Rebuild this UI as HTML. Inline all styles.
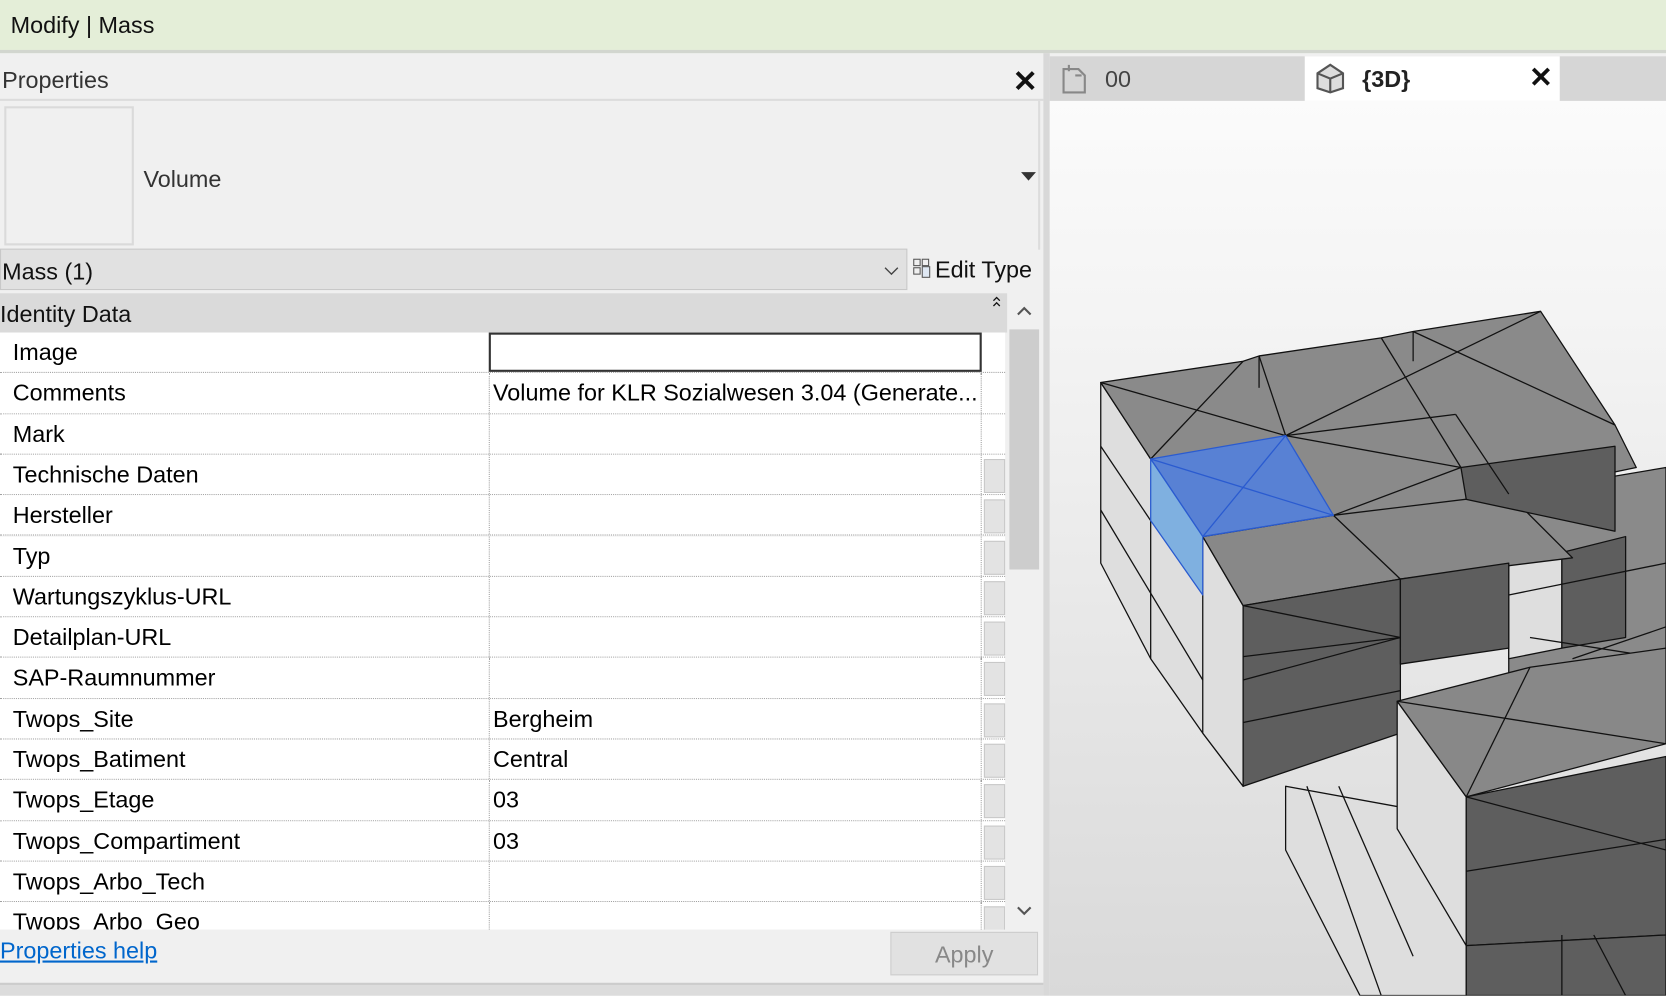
<!DOCTYPE html>
<html><head><meta charset="utf-8"><style>
*{margin:0;padding:0;box-sizing:border-box}
html,body{width:1666px;height:996px;overflow:hidden;background:#f0f0f0;font-family:"Liberation Sans",sans-serif}
#s{position:absolute;left:0;top:0;width:1568px;height:937px;transform:scale(1.0625);transform-origin:0 0;background:#f0f0f0}
.a{position:absolute}
.t{font-size:22px;color:#111;white-space:nowrap}
.row{position:absolute;left:0;width:946px;height:38.3px;border-bottom:1px dotted #a0a0a0;background:#fff}
.row .n{position:absolute;left:12px;top:6px;font-size:22px}
.row .v{position:absolute;left:460px;top:0;width:464px;height:100%;border-left:1px dotted #a0a0a0;border-right:1px dotted #a0a0a0;padding-left:3px;padding-top:6px;font-size:22px;white-space:nowrap;overflow:hidden}
.row .g{position:absolute;left:926px;top:4px;width:20px;height:32px;background:#e3e3e3;border:1px solid #c8c8c8}
</style></head><body><div id="s">
<div class="a" style="left:0;top:0;width:1568px;height:50px;background:#e4eed8;border-bottom:3px solid #d2d6cf"></div>
<div class="a t" style="left:10px;top:11px">Modify | Mass</div>

<div class="a" style="left:0;top:53px;width:982px;height:42px;background:#f0f0f0;border-bottom:2px solid #dcdcdc"></div>
<div class="a t" style="left:2px;top:63px;color:#333">Properties</div>
<div class="a" style="left:953px;top:60px;font-size:28px;font-weight:bold;color:#111">✕</div>

<div class="a" style="left:4px;top:100px;width:122px;height:131px;border:2px solid #dadada;background:#f0f0f0"></div>
<div class="a t" style="left:135px;top:156px;color:#333">Volume</div>
<div class="a" style="left:961px;top:162px;width:0;height:0;border-left:7px solid transparent;border-right:7px solid transparent;border-top:8px solid #333"></div>
<div class="a" style="left:977px;top:95px;width:2px;height:140px;background:#dcdcdc"></div>

<div class="a" style="left:0;top:234px;width:854px;height:39px;background:#e1e1e1;border:1px solid #c8c8c8"></div>
<div class="a t" style="left:2px;top:243px">Mass (1)</div>
<svg class="a" style="left:832px;top:250px" width="14" height="10"><path d="M1 2l6 6 6-6" fill="none" stroke="#444" stroke-width="1.3"/></svg>
<svg class="a" style="left:859px;top:243px" width="18" height="20"><rect x="1" y="1" width="6" height="6" fill="none" stroke="#555"/><rect x="1" y="9" width="6" height="6" fill="none" stroke="#555"/><rect x="9" y="1" width="6" height="6" fill="none" stroke="#555"/><rect x="9" y="8" width="7" height="10" fill="#dfe8f3" stroke="#555"/></svg>
<div class="a t" style="left:880px;top:241px">Edit Type</div>

<div class="a" style="left:0;top:276px;width:948px;height:37px;background:#dadada"></div>
<div class="a t" style="left:0;top:283px">Identity Data</div>
<svg class="a" style="left:933px;top:278px" width="10" height="12"><path d="M2 5l3-3 3 3M2 10l3-3 3 3" fill="none" stroke="#111" stroke-width="1.2"/></svg>
<div class="a" style="left:948px;top:276px;width:30px;height:600px;background:#f0f0f0"></div>
<div class="a" style="left:950px;top:310px;width:28px;height:226px;background:#cdcdcd"></div>
<svg class="a" style="left:957px;top:288px" width="14" height="10"><path d="M1 8l6-6 6 6" fill="none" stroke="#555" stroke-width="2"/></svg>
<svg class="a" style="left:957px;top:852px" width="14" height="10"><path d="M1 2l6 6 6-6" fill="none" stroke="#555" stroke-width="2"/></svg>

<div class="row" style="top:313px"><span class="n">Image</span><div class="v" style="border:2px solid #333;height:37px"></div></div>
<div class="row" style="top:351.3px"><span class="n">Comments</span><div class="v">Volume for KLR Sozialwesen 3.04 (Generate...</div></div>
<div class="row" style="top:389.6px"><span class="n">Mark</span><div class="v"></div></div>
<div class="row" style="top:427.9px"><span class="n">Technische Daten</span><div class="v"></div><div class="g"></div></div>
<div class="row" style="top:466.2px"><span class="n">Hersteller</span><div class="v"></div><div class="g"></div></div>
<div class="row" style="top:504.5px"><span class="n">Typ</span><div class="v"></div><div class="g"></div></div>
<div class="row" style="top:542.8px"><span class="n">Wartungszyklus-URL</span><div class="v"></div><div class="g"></div></div>
<div class="row" style="top:581.1px"><span class="n">Detailplan-URL</span><div class="v"></div><div class="g"></div></div>
<div class="row" style="top:619.4px"><span class="n">SAP-Raumnummer</span><div class="v"></div><div class="g"></div></div>
<div class="row" style="top:657.7px"><span class="n">Twops_Site</span><div class="v">Bergheim</div><div class="g"></div></div>
<div class="row" style="top:696px"><span class="n">Twops_Batiment</span><div class="v">Central</div><div class="g"></div></div>
<div class="row" style="top:734.3px"><span class="n">Twops_Etage</span><div class="v">03</div><div class="g"></div></div>
<div class="row" style="top:772.6px"><span class="n">Twops_Compartiment</span><div class="v">03</div><div class="g"></div></div>
<div class="row" style="top:810.9px"><span class="n">Twops_Arbo_Tech</span><div class="v"></div><div class="g"></div></div>
<div class="row" style="top:849.2px;height:26px;overflow:hidden;border-bottom:none"><span class="n">Twops_Arbo_Geo</span><div class="v"></div><div class="g"></div></div>

<div class="a" style="left:0;top:875px;width:982px;height:50px;background:#f0f0f0"></div>
<div class="a" style="left:0;top:882px;font-size:22px;color:#0066cc;text-decoration:underline">Properties help</div>
<div class="a" style="left:838px;top:877px;width:139px;height:41px;background:#e1e1e1;border:1px solid #ccc;font-size:22px;color:#888;text-align:center;line-height:41px">Apply</div>
<div class="a" style="left:0;top:925px;width:982px;height:12px;background:#dcdcdc;border-top:2px solid #ccc"></div>

<div class="a" style="left:982px;top:50px;width:6px;height:887px;background:#d8d8d8"></div>
<div class="a" style="left:988px;top:53px;width:580px;height:42px;background:#d6d6d6"></div>
<svg class="a" style="left:997px;top:59px" width="30" height="30"><path d="M4 6h14l6 6v16H4z" fill="none" stroke="#888" stroke-width="2"/><path d="M9 2v6M15 12h6" stroke="#888" stroke-width="2"/></svg>
<div class="a t" style="left:1040px;top:62px;color:#444">00</div>
<div class="a" style="left:1228px;top:53px;width:240px;height:42px;background:#fff"></div>
<svg class="a" style="left:1236px;top:57px" width="32" height="32"><path d="M4 12L16 4l12 8v14l-12 4-12-4z" fill="#ddd" stroke="#555" stroke-width="2"/><path d="M4 12l12 5 12-5M16 17v13" stroke="#555" stroke-width="2" fill="none"/></svg>
<div class="a t" style="left:1282px;top:62px;color:#222;font-weight:bold">{3D}</div>
<div class="a" style="left:1439px;top:58px;font-size:27px;font-weight:bold;color:#111">✕</div>

<div class="a" style="left:988px;top:95px;width:580px;height:842px;background:linear-gradient(#fbfbfb,#f2f2f2 30%,#d9d9d9)"></div>
<svg class="a" style="left:0;top:0" width="1568" height="937" stroke="#111" stroke-width="1.2" stroke-linejoin="round">
<polygon fill="#8a8a8a" points="1420,465 1568,440 1568,640 1420,660"/>
<polygon fill="#dedede" points="1420,530 1470,520 1470,610 1420,620"/>
<polygon fill="#5e5e5e" points="1470,520 1530,505 1530,600 1470,610"/>
<line x1="1420" y1="560" x2="1568" y2="530"/><line x1="1440" y1="600" x2="1568" y2="620"/>
<line x1="1480" y1="620" x2="1568" y2="590"/>
<polygon fill="#dedede" points="1036,360 1083,432 1132,505 1170,570 1170,740 1132,690 1083,620 1036,530"/>
<polygon fill="#8a8a8a" points="1036,360 1170,340 1185,335 1300,318 1330,312 1450,293 1520,400 1540,440 1420,465 1310,485 1255,485 1132,505 1083,432"/>
<polygon fill="#dedede" points="1132,505 1170,570 1170,740 1132,690"/>
<polygon fill="#888" points="1132,505 1255,485 1318,545 1170,570"/>
<polygon fill="#5e5e5e" points="1170,570 1318,545 1318,690 1170,740"/>
<line x1="1170" y1="618" x2="1318" y2="600"/><line x1="1170" y1="680" x2="1318" y2="650"/>
<line x1="1170" y1="570" x2="1318" y2="600"/><line x1="1170" y1="640" x2="1318" y2="600"/>
<polygon fill="#888" points="1255,485 1420,465 1480,525 1318,545"/>
<polygon fill="#5e5e5e" points="1318,545 1420,530 1420,610 1318,625"/>
<polygon fill="#5e5e5e" points="1375,440 1520,420 1520,500 1380,470"/>
<line x1="1036" y1="360" x2="1210" y2="410"/><line x1="1170" y1="340" x2="1083" y2="432"/>
<line x1="1185" y1="335" x2="1210" y2="410"/><line x1="1210" y1="410" x2="1450" y2="293"/>
<line x1="1210" y1="410" x2="1370" y2="390"/><line x1="1370" y1="390" x2="1420" y2="465"/>
<line x1="1300" y1="318" x2="1375" y2="440"/><line x1="1330" y1="312" x2="1520" y2="400"/>
<line x1="1210" y1="410" x2="1375" y2="440"/><line x1="1255" y1="485" x2="1375" y2="440"/>
<line x1="1185" y1="335" x2="1185" y2="365"/><line x1="1330" y1="312" x2="1330" y2="340"/>
<line x1="1036" y1="420" x2="1083" y2="490"/><line x1="1083" y1="490" x2="1083" y2="620"/>
<line x1="1036" y1="480" x2="1132" y2="640"/>
<polygon fill="#4f7fe0" fill-opacity="0.85" stroke="#2a5bd0" points="1083,432 1210,410 1255,485 1132,505"/>
<polygon fill="#7fb0e0" stroke="#2a5bd0" points="1083,432 1132,505 1132,560 1083,490"/>
<line stroke="#2a5bd0" x1="1083" y1="432" x2="1255" y2="485"/><line stroke="#2a5bd0" x1="1210" y1="410" x2="1132" y2="505"/>
<polygon fill="#dedede" points="1210,740 1320,760 1380,890 1380,937 1280,937 1210,800"/>
<line x1="1230" y1="740" x2="1300" y2="937"/><line x1="1260" y1="740" x2="1330" y2="900"/>
<polygon fill="#dedede" points="1315,660 1380,750 1380,890 1315,780"/>
<polygon fill="#888" points="1315,660 1440,628 1568,610 1568,700 1380,750"/>
<polygon fill="#5e5e5e" points="1380,750 1568,712 1568,880 1380,890"/>
<line x1="1380" y1="820" x2="1568" y2="790"/><line x1="1380" y1="750" x2="1568" y2="800"/>
<line x1="1315" y1="660" x2="1568" y2="700"/><line x1="1440" y1="628" x2="1380" y2="750"/>
<polygon fill="#5e5e5e" points="1380,890 1568,880 1568,937 1380,937"/>
<line x1="1470" y1="880" x2="1470" y2="937"/><line x1="1500" y1="880" x2="1530" y2="937"/>
</svg>
</div></body></html>
